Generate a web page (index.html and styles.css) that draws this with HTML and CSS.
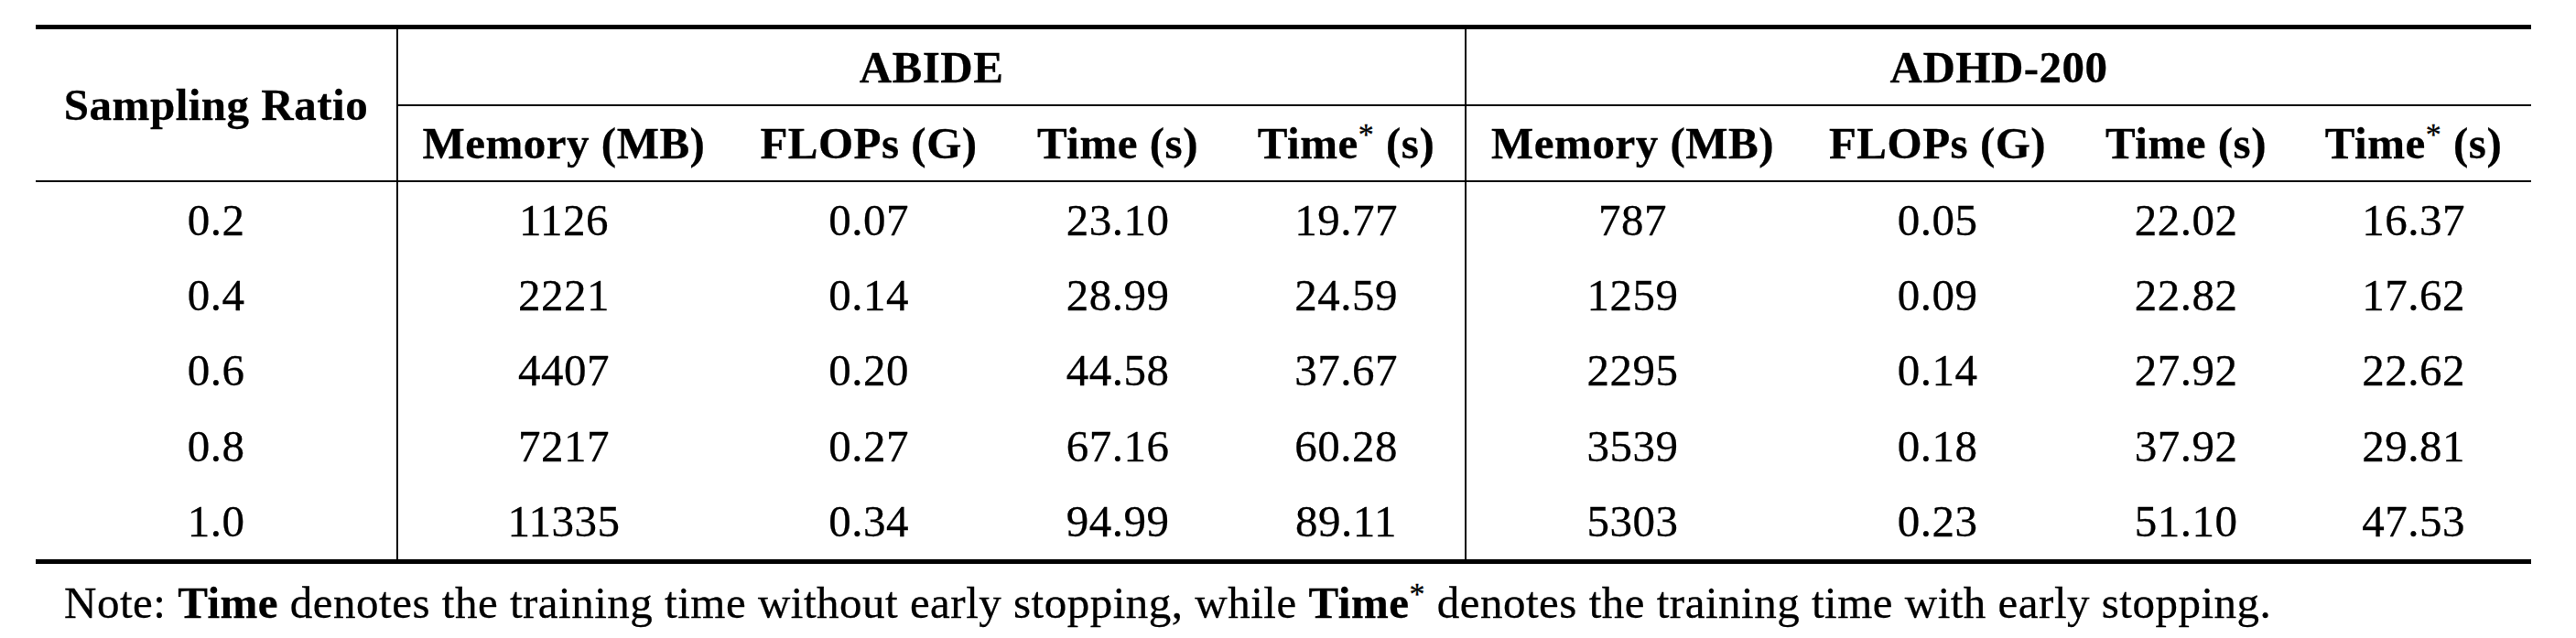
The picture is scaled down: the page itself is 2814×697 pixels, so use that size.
FILE: index.html
```html
<!DOCTYPE html>
<html lang="en">
<head>
<meta charset="utf-8">
<title>Sampling ratio efficiency</title>
<link rel="stylesheet" href="styles.css">
</head>
<body>
<div class="page">
  <table class="results">
    <colgroup>
      <col class="w-ratio">
      <col class="w-mem-a"><col class="w-flops-a"><col class="w-time"><col class="w-star-a">
      <col class="w-mem-b"><col class="w-flops-b"><col class="w-time"><col class="w-star-b">
    </colgroup>
    <thead>
      <tr class="group-row">
        <th rowspan="2" class="ratio-head">Sampling Ratio</th>
        <th colspan="4" class="group sep">ABIDE</th>
        <th colspan="4" class="group sep">ADHD-200</th>
      </tr>
      <tr class="metric-row">
        <th class="sep">Memory (MB)</th>
        <th>FLOPs (G)</th>
        <th>Time (s)</th>
        <th>Time<sup class="star">*</sup> (s)</th>
        <th class="sep">Memory (MB)</th>
        <th>FLOPs (G)</th>
        <th>Time (s)</th>
        <th>Time<sup class="star">*</sup> (s)</th>
      </tr>
    </thead>
    <tbody>
      <tr><td>0.2</td><td class="sep">1126</td><td>0.07</td><td>23.10</td><td>19.77</td><td class="sep">787</td><td>0.05</td><td>22.02</td><td>16.37</td></tr>
      <tr><td>0.4</td><td class="sep">2221</td><td>0.14</td><td>28.99</td><td>24.59</td><td class="sep">1259</td><td>0.09</td><td>22.82</td><td>17.62</td></tr>
      <tr><td>0.6</td><td class="sep">4407</td><td>0.20</td><td>44.58</td><td>37.67</td><td class="sep">2295</td><td>0.14</td><td>27.92</td><td>22.62</td></tr>
      <tr><td>0.8</td><td class="sep">7217</td><td>0.27</td><td>67.16</td><td>60.28</td><td class="sep">3539</td><td>0.18</td><td>37.92</td><td>29.81</td></tr>
      <tr><td>1.0</td><td class="sep">11335</td><td>0.34</td><td>94.99</td><td>89.11</td><td class="sep">5303</td><td>0.23</td><td>51.10</td><td>47.53</td></tr>
    </tbody>
  </table>
  <p class="note">Note: <b>Time</b> denotes the training time without early stopping, while <b>Time</b><sup class="star">*</sup> denotes the training time with early stopping.</p>
</div>
</body>
</html>
```
FILE: styles.css
```css
html, body {
  margin: 0;
  background: #ffffff;
}

body {
  font-family: "Liberation Serif", "Times New Roman", serif;
  color: #000000;
  -webkit-text-stroke: 0.3px #000;
}

.page {
  padding: 27px 0 0 39px;
}

.results {
  border-collapse: separate;
  border-spacing: 0;
  table-layout: fixed;
  width: 2726px;
  border-top: 5px solid #000;
  border-bottom: 5px solid #000;
  font-size: 49px;
  letter-spacing: 0.5px;
}

.w-ratio { width: 394px; }
.w-mem-a { width: 364px; }
.w-flops-a { width: 304px; }
.w-time { width: 240px; }
.w-star-a { width: 259px; }
.w-mem-b { width: 365px; }
.w-flops-b { width: 303px; }
.w-star-b { width: 257px; }

.results th,
.results td {
  padding: 0;
  text-align: center;
  vertical-align: middle;
  white-space: nowrap;
  line-height: normal;
}

.results th {
  font-weight: bold;
}

.group-row th {
  height: 82px;
}

.group-row .group {
  border-bottom: 2px solid #000;
}

.ratio-head {
  border-bottom: 2px solid #000;
  padding-bottom: 27px;
}

.metric-row th {
  height: 81px;
  border-bottom: 2px solid #000;
}

.results td {
  height: 82.4px;
}

.sep {
  border-left: 2px solid #000;
}

.star {
  font-size: 34px;
  font-weight: normal;
  vertical-align: 15px;
  line-height: 0;
}

.note {
  margin: 14px 0 0 31px;
  font-size: 49px;
  letter-spacing: 0.5px;
  line-height: normal;
  white-space: nowrap;
}
```
